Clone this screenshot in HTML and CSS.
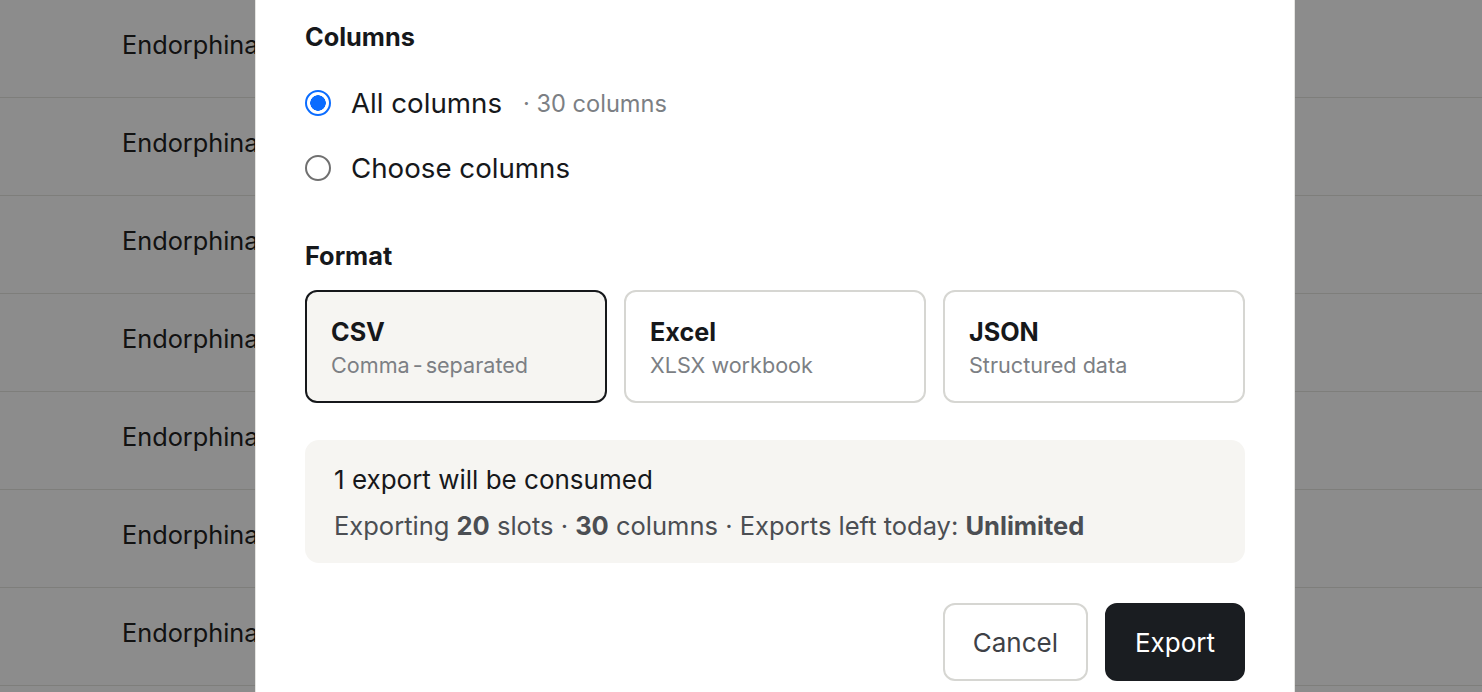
FILE: index.html
```html
<!DOCTYPE html>
<html>
<head>
<meta charset="utf-8">
<link rel="stylesheet" href="styles.css">
</head>
<body>
<div class="table">
  <div class="row"><span class="cell">Endorphina</span></div>
  <div class="row"><span class="cell">Endorphina</span></div>
  <div class="row"><span class="cell">Endorphina</span></div>
  <div class="row"><span class="cell">Endorphina</span></div>
  <div class="row"><span class="cell">Endorphina</span></div>
  <div class="row"><span class="cell">Endorphina</span></div>
  <div class="row"><span class="cell">Endorphina</span></div>
  <div class="row"><span class="cell">Endorphina</span></div>
</div>
<div class="overlay"></div>
<div class="modal">
  <section class="group">
    <h3 class="label">Columns</h3>
    <div class="options">
      <label class="option">
        <span class="radio checked"></span>
        <span class="opt-text">All columns</span>
        <span class="opt-meta">· 30 columns</span>
      </label>
      <label class="option">
        <span class="radio"></span>
        <span class="opt-text">Choose columns</span>
      </label>
    </div>
  </section>
  <section class="group format">
    <h3 class="label">Format</h3>
    <div class="cards">
      <div class="card selected">
        <div class="card-title">CSV</div>
        <div class="card-sub">Comma<span class="hy">-</span>separated</div>
      </div>
      <div class="card">
        <div class="card-title">Excel</div>
        <div class="card-sub">XLSX workbook</div>
      </div>
      <div class="card">
        <div class="card-title">JSON</div>
        <div class="card-sub">Structured data</div>
      </div>
    </div>
  </section>
  <div class="info">
    <div class="info-title">1 export will be consumed</div>
    <div class="info-line">Exporting <b>20</b> slots · <b>30</b> columns · Exports left today: <b>Unlimited</b></div>
  </div>
  <div class="actions">
    <button class="btn btn-secondary">Cancel</button>
    <button class="btn btn-primary">Export</button>
  </div>
</div>
</body>
</html>
```

FILE: styles.css
```css
* { box-sizing: border-box; }
html, body { margin: 0; padding: 0; }
body {
  font-family: Inter, "Noto Sans", sans-serif;
  background: #fff;
  color: #16181b;
  overflow: hidden;
  height: 692px;
}
.table {
  display: flex;
  flex-direction: column;
  margin-top: -1px;
}
.row {
  height: 98px;
  border-top: 1px solid #e6e6e1;
  display: flex;
  align-items: center;
  padding-left: 122px;
  padding-bottom: 8px;
  flex-shrink: 0;
}
.cell {
  font-size: 25.3px;
  color: #222;
}
.overlay {
  position: fixed;
  inset: 0;
  background: rgba(0,0,0,0.45);
}
.modal {
  position: fixed;
  top: 0;
  left: 255px;
  width: 1040px;
  height: 720px;
  background: #fff;
  border-left: 1px solid #e4e4e1;
  border-right: 1px solid #e4e4e1;
  padding: 21px 49px 0;
  display: flex;
  flex-direction: column;
}
.label {
  margin: 0;
  font-size: 25.3px;
  line-height: 32px;
  font-weight: 700;
  color: #16181b;
}
.options {
  display: flex;
  flex-direction: column;
  gap: 23px;
  margin-top: 29px;
}
.option {
  display: flex;
  align-items: center;
  height: 42px;
}
.radio {
  width: 26px;
  height: 26px;
  border-radius: 50%;
  border: 2px solid #707070;
  margin-right: 20px;
  flex-shrink: 0;
}
.radio.checked {
  border: 2.5px solid #0a6cff;
  background: radial-gradient(circle, #0a6cff 0 7.5px, #fff 8px);
}
.opt-text {
  font-size: 27.7px;
  color: #16181b;
}
.opt-meta {
  font-size: 23.6px;
  color: #7c7f84;
  margin-left: 21px;
}
.format {
  margin-top: 51px;
}
.cards {
  display: grid;
  grid-template-columns: repeat(3, 1fr);
  gap: 17px;
  margin-top: 18px;
}
.card {
  height: 113px;
  border: 2px solid #d6d6d2;
  border-radius: 12px;
  padding: 24px 24px 0;
  background: #fff;
}
.card.selected {
  border-color: #16181b;
  background: #f6f5f2;
}
.card-title {
  font-size: 25.2px;
  font-weight: 700;
  line-height: 32px;
  color: #16181b;
}
.card-sub {
  font-size: 21.6px;
  line-height: 28px;
  color: #7c7f84;
  margin-top: 3px;
}
.hy {
  margin: 0 3px;
}
.info {
  margin-top: 37px;
  background: #f6f5f2;
  border-radius: 14px;
  padding: 23px 29px 0;
  height: 123px;
}
.info-title {
  font-size: 26px;
  line-height: 34px;
  color: #16181b;
}
.info-line {
  font-size: 25.5px;
  line-height: 34px;
  color: #4b4e53;
  margin-top: 12px;
}
.info-line b { font-weight: 700; }
.actions {
  display: flex;
  justify-content: flex-end;
  gap: 17px;
  margin-top: 40px;
}
.btn {
  font-family: inherit;
  font-size: 26px;
  height: 78px;
  border-radius: 12px;
  padding: 0 28px;
  cursor: pointer;
}
.btn-secondary {
  background: #fff;
  border: 2px solid #d6d6d2;
  color: #3e4146;
}
.btn-primary {
  background: #1a1d21;
  border: 2px solid #1a1d21;
  color: #fff;
}
```
